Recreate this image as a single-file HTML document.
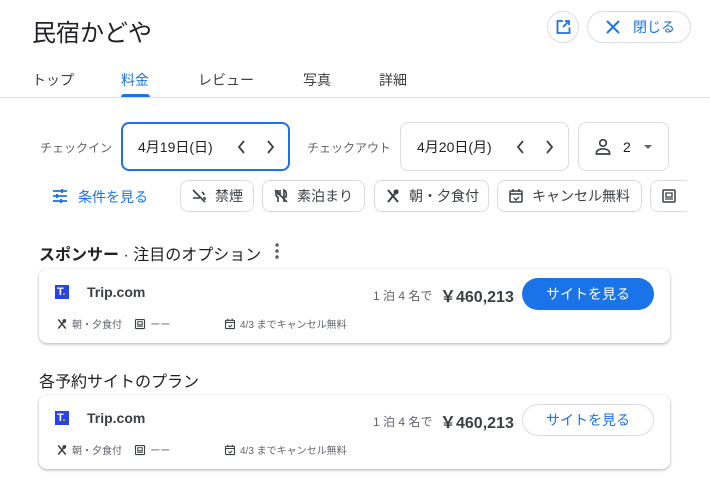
<!DOCTYPE html>
<html><head><meta charset="utf-8"><style>
*{box-sizing:border-box;margin:0;padding:0}
body{width:710px;height:483px;overflow:hidden;background:#fff;font-family:"Liberation Sans","Noto Sans CJK JP",sans-serif;color:#202124;position:relative}
.a{position:absolute}
.box{position:absolute;border:1px solid #dadce0;border-radius:8px;display:flex;align-items:center;font-size:14px}
.chip{position:absolute;top:180px;height:32px;border:1px solid #dadce0;border-radius:8px;display:flex;align-items:center;padding-left:10px;font-size:14px;color:#3c4043;gap:8px}
.card{position:absolute;left:39px;width:631px;height:74px;border-radius:8px;box-shadow:0 1px 3px rgba(60,64,67,.3),0 1px 2px rgba(60,64,67,.15)}
.sm{font-size:10px;color:#5f6368;display:flex;align-items:center;gap:4px}
</style></head><body>
<svg width="0" height="0" style="position:absolute"><defs>
<symbol id="chev" viewBox="0 0 40 20"><path d="M7 4l-5 6 5 6M31 4l5 6-5 6" stroke="#3c4043" stroke-width="1.8" fill="none"/></symbol>
<symbol id="fork" viewBox="0 0 16 16"><path d="M3 2l10 12M13 2L3 14" stroke="#3c4043" stroke-width="2"/><circle cx="11" cy="4" r="2.5" fill="#3c4043"/></symbol>
<symbol id="cal" viewBox="0 0 16 16"><rect x="2" y="3" width="12" height="11" rx="1" stroke="#3c4043" stroke-width="1.5" fill="none"/><path d="M2 6h12M5 1v3M11 1v3M6 10l2 2 3-3" stroke="#3c4043" stroke-width="1.4" fill="none"/></symbol>
<symbol id="img" viewBox="0 0 16 16"><rect x="2" y="2" width="12" height="12" rx="1" stroke="#3c4043" stroke-width="1.5" fill="none"/><path d="M5 5h6v4H5zM4 11h8" stroke="#3c4043" stroke-width="1.3" fill="none"/></symbol>
</defs></svg>
<div class="a" style="left:32px;top:13px;font-size:24px">民宿かどや</div>
<div class="a" style="left:547px;top:11px;width:32px;height:32px;border:1px solid #dadce0;border-radius:50%"><svg width="30" height="30" viewBox="0 0 30 30" style="position:absolute;left:0;top:0"><path d="M15 9h-5.5v12h12v-5.5M17 9h4v4M21 9l-6 6" stroke="#1a73e8" stroke-width="1.8" fill="none"/></svg></div>
<div class="a" style="left:587px;top:11px;width:104px;height:32px;border:1px solid #dadce0;border-radius:16px;color:#1a73e8;font-size:14px;line-height:30px;padding-left:45px">閉じる<svg width="16" height="16" viewBox="0 0 16 16" style="position:absolute;left:17px;top:7px"><path d="M2 2l12 12M14 2L2 14" stroke="#1a73e8" stroke-width="2"/></svg></div>
<div class="a" style="top:70px;left:32px;font-size:14px;color:#3c4043">トップ</div>
<div class="a" style="top:70px;left:121px;font-size:14px;color:#1a73e8">料金</div>
<div class="a" style="top:70px;left:198px;font-size:14px;color:#3c4043">レビュー</div>
<div class="a" style="top:70px;left:303px;font-size:14px;color:#3c4043">写真</div>
<div class="a" style="top:70px;left:379px;font-size:14px;color:#3c4043">詳細</div>
<div class="a" style="left:121px;top:94px;width:29px;height:3px;background:#1a73e8;border-radius:3px 3px 0 0"></div>
<div class="a" style="left:0;top:97px;width:710px;height:1px;background:#dadce0"></div>

<div class="a" style="left:40px;top:139px;font-size:12px;color:#5f6368">チェックイン</div>
<div class="box" style="left:121px;top:122px;width:169px;height:49px;border:2px solid #1a73e8;padding-left:15px">4月19日(日)<svg width="40" height="20" style="position:absolute;left:114px;top:13px"><use href="#chev"/></svg></div>
<div class="a" style="left:307px;top:139px;font-size:12px;color:#5f6368">チェックアウト</div>
<div class="box" style="left:400px;top:122px;width:169px;height:49px;padding-left:16px">4月20日(月)<svg width="40" height="20" style="position:absolute;left:115px;top:14px"><use href="#chev"/></svg></div>
<div class="box" style="left:578px;top:122px;width:91px;height:49px;padding-left:44px"><svg width="20" height="20" viewBox="0 0 20 20" style="position:absolute;left:14px;top:14px"><circle cx="10" cy="6" r="3.3" stroke="#3c4043" stroke-width="1.7" fill="none"/><path d="M3.5 17v-1.5c0-2.5 4-3.7 6.5-3.7s6.5 1.2 6.5 3.7V17z" stroke="#3c4043" stroke-width="1.7" fill="none"/></svg>2<span style="position:absolute;left:65px;top:22px;border:4px solid transparent;border-top:4px solid #5f6368"></span></div>

<div class="a" style="left:52px;top:187px;font-size:14px;color:#1a73e8;padding-left:26px"><svg width="16" height="14" viewBox="0 0 16 14" style="position:absolute;left:0;top:2px"><path d="M1 2h14M1 7h14M1 12h14" stroke="#1a73e8" stroke-width="1.8"/><path d="M10 0v4M5 5v4M9 10v4" stroke="#1a73e8" stroke-width="2"/></svg>条件を見る</div>
<div class="a" style="left:0;top:0;width:687px;height:220px;overflow:hidden">
<div class="chip" style="left:180px;width:74px"><svg width="16" height="16" viewBox="0 0 16 16"><path d="M2 2l12 12M2 10h7M12 10h2v2M11 4c1 1 2 1 2 3" stroke="#3c4043" stroke-width="1.6" fill="none"/></svg><span>禁煙</span></div>
<div class="chip" style="left:262px;width:103px"><svg width="16" height="16" viewBox="0 0 16 16"><path d="M3 2v5c0 1 1 2 2 2v5M5 2v5M7 2v5M11 14V2c2 1 3 3 2 7h-2M2 2l12 12" stroke="#3c4043" stroke-width="1.6" fill="none"/></svg><span>素泊まり</span></div>
<div class="chip" style="left:374px;width:115px"><svg width="16" height="16"><use href="#fork"/></svg><span>朝・夕食付</span></div>
<div class="chip" style="left:497px;width:145px"><svg width="16" height="16"><use href="#cal"/></svg><span>キャンセル無料</span></div>
<div class="chip" style="left:650px;width:80px"><svg width="16" height="16"><use href="#img"/></svg></div>
</div>

<div class="a" style="left:39px;top:241px;font-size:16px"><b>スポンサー</b> · 注目のオプション</div>
<div class="a" style="left:275px;top:242px;width:4px;height:18px;background:radial-gradient(circle,#5f6368 1.6px,transparent 2px) 0 0/4px 6px"></div>

<div class="card" style="top:269px"></div>
<div class="card" style="top:395px"></div>
<div class="a" style="left:39px;top:368px;font-size:16px">各予約サイトのプラン</div>

<div class="a" style="left:55px;top:285px;width:14px;height:14px;background:#2744e8;color:#fff;font-size:11px;font-weight:bold;line-height:14px;padding-left:2px">T<span style="color:#fbbc04">.</span></div>
<div class="a" style="left:87px;top:284px;font-size:14px;font-weight:bold;color:#3c4043">Trip.com</div>
<div class="a" style="left:373px;top:287px;font-size:12px;color:#5f6368">1 泊 4 名で</div>
<div class="a" style="left:440px;top:283px;font-size:16px;font-weight:bold;color:#3c4043">￥460,213</div>
<div class="a" style="left:522px;top:278px;width:132px;height:32px;border-radius:16px;background:#1a73e8;color:#fff;font-size:14px;line-height:32px;text-align:center">サイトを見る</div>
<div class="a sm" style="left:56px;top:316px"><svg width="12" height="12"><use href="#fork"/></svg>朝・夕食付 &nbsp;&nbsp;<svg width="12" height="12"><use href="#img"/></svg>ーー</div>
<div class="a sm" style="left:224px;top:316px"><svg width="12" height="12"><use href="#cal"/></svg>4/3 までキャンセル無料</div>

<div class="a" style="left:55px;top:411px;width:14px;height:14px;background:#2744e8;color:#fff;font-size:11px;font-weight:bold;line-height:14px;padding-left:2px">T<span style="color:#fbbc04">.</span></div>
<div class="a" style="left:87px;top:410px;font-size:14px;font-weight:bold;color:#3c4043">Trip.com</div>
<div class="a" style="left:373px;top:413px;font-size:12px;color:#5f6368">1 泊 4 名で</div>
<div class="a" style="left:440px;top:409px;font-size:16px;font-weight:bold;color:#3c4043">￥460,213</div>
<div class="a" style="left:522px;top:404px;width:132px;height:32px;border-radius:16px;border:1px solid #dadce0;color:#1a73e8;font-size:14px;line-height:30px;text-align:center">サイトを見る</div>
<div class="a sm" style="left:56px;top:442px"><svg width="12" height="12"><use href="#fork"/></svg>朝・夕食付 &nbsp;&nbsp;<svg width="12" height="12"><use href="#img"/></svg>ーー</div>
<div class="a sm" style="left:224px;top:442px"><svg width="12" height="12"><use href="#cal"/></svg>4/3 までキャンセル無料</div>
</body></html>
